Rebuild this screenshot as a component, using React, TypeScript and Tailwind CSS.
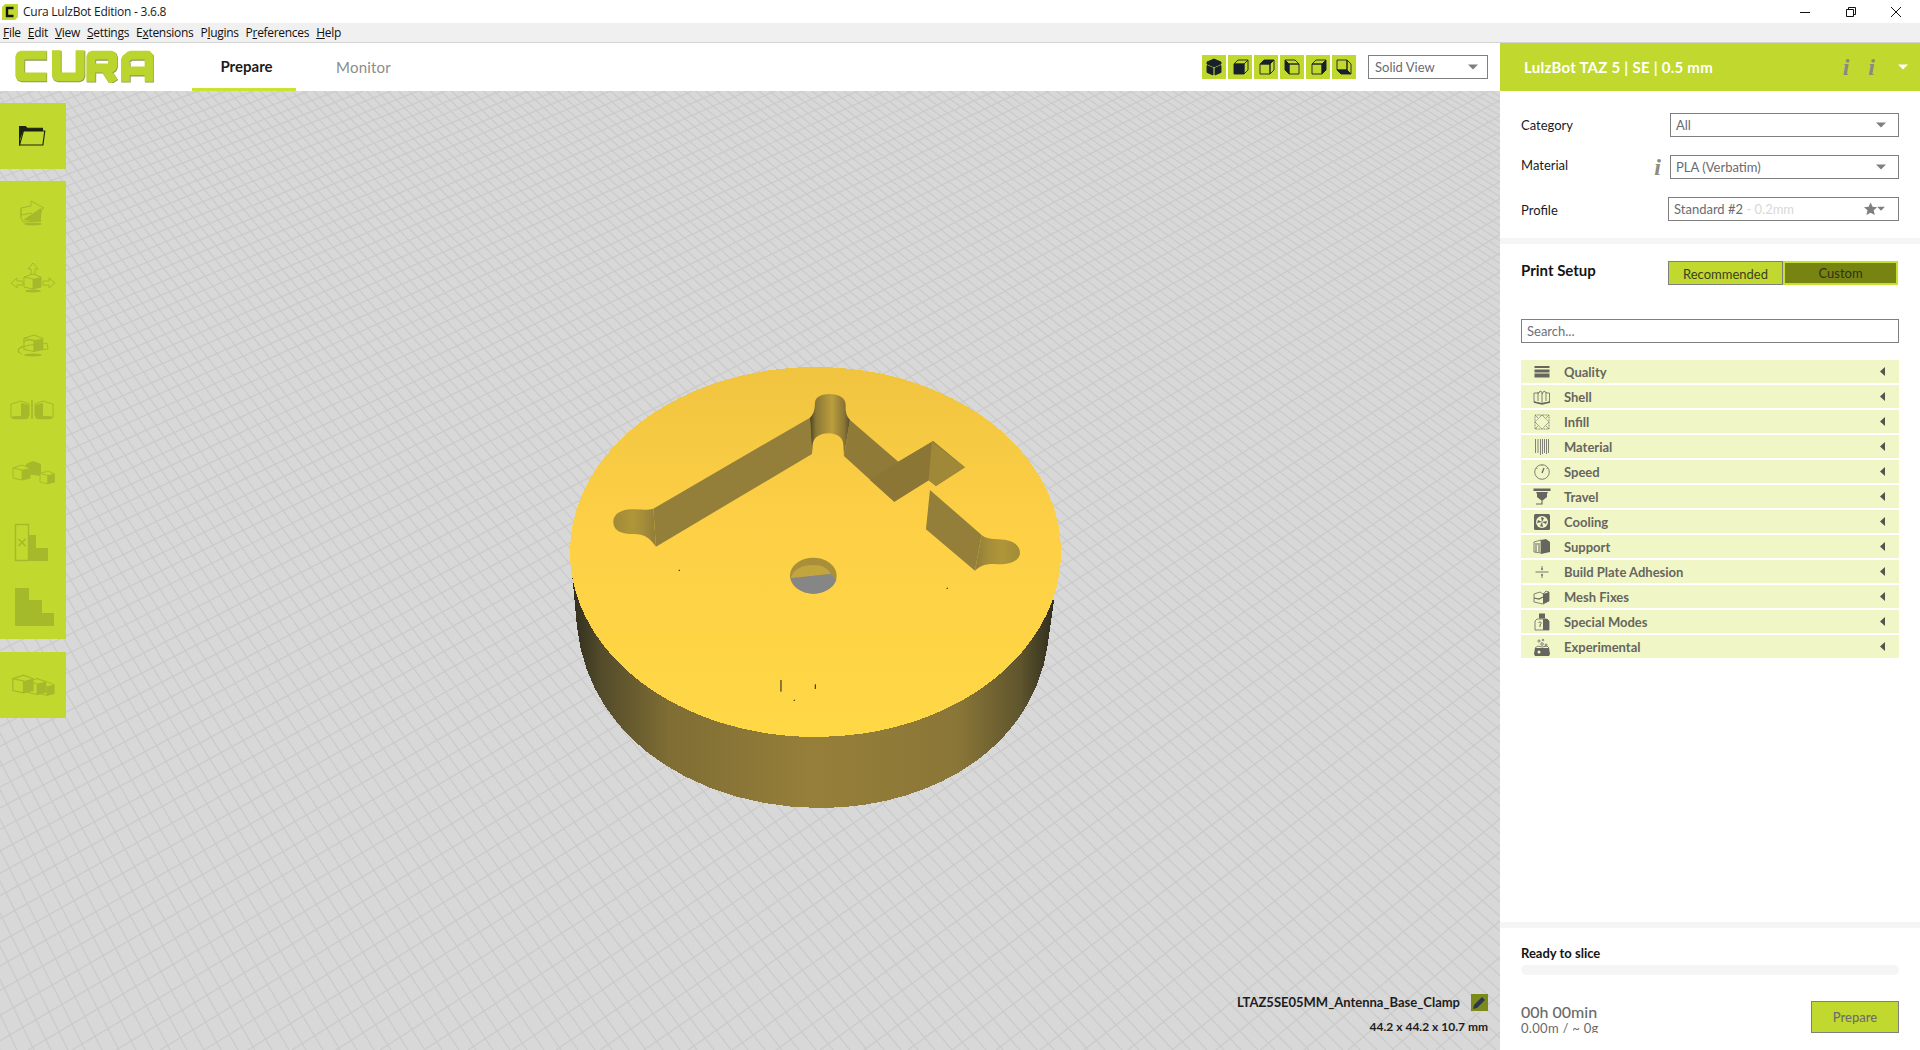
import React from 'react';

const gridA: number[] = [];
for (let x = 0; x < 3300; x += 17) gridA.push(x);
const gridB: number[] = [];
for (let x = -2700; x < 1600; x += 44) gridB.push(x);

const settings = [
  'Quality',
  'Shell',
  'Infill',
  'Material',
  'Speed',
  'Travel',
  'Cooling',
  'Support',
  'Build Plate Adhesion',
  'Mesh Fixes',
  'Special Modes',
  'Experimental',
];

const menus: [string, string, string][] = [
  ['', 'F', 'ile'],
  ['', 'E', 'dit'],
  ['', 'V', 'iew'],
  ['', 'S', 'ettings'],
  ['E', 'x', 'tensions'],
  ['P', 'l', 'ugins'],
  ['P', 'r', 'eferences'],
  ['', 'H', 'elp'],
];

// small per-icon offsets so each one lands where the screenshot has it
const iconNudge: Record<string, string> = {
  open: 'translate(3 1) scale(0.95 0.9)',
  scale: 'translate(0 -1)',
  move: 'translate(0 3)',
  rotate: 'translate(0 3)',
  mirror: 'translate(-1 0)',
  multi: 'translate(-1 2)',
  blocker: 'translate(-3 2)',
  support: 'translate(-3 2)',
  group: 'translate(-3 -4) scale(1.13)',
};

const Caret = ({ color = '#7f7f7f' }: { color?: string }) => (
  <svg width="12" height="6" viewBox="0 0 12 6">
    <path d="M1 0.5h10L6 5.5z" fill={color} />
  </svg>
);

const InfoMark = ({ className }: { className: string }) => (
  <span className={`font-['Liberation_Serif',serif] font-bold italic leading-none text-[#8a8a80] ${className}`}>i</span>
);

const ViewCube = ({ face }: { face: string }) => {
  const dark = '#18202c';
  const front = 'M6 9h10v10H6z';
  const top = 'M6 9l4-4h10l-4 4z';
  const right = 'M16 9l4-4v10l-4 4z';
  return (
    <div className="flex h-6 w-6 items-center justify-center bg-[#c1d82f]">
      <svg width="24" height="24" viewBox="0 0 24 24" fill="none" stroke={dark} strokeWidth="0.9">
        {face === 'iso' && (
          <>
            <path d="M12 4l7 3v2l-7 3-7-3V7z" fill={dark} />
            <path d="M5 10.5l6 2.6V20l-6-2.6zM19 10.5l-6 2.6V20l6-2.6z" fill={dark} />
          </>
        )}
        {face === 'left' && (
          <>
            <path d={front} fill={dark} />
            <path d={top} />
            <path d={right} />
          </>
        )}
        {face === 'top' && (
          <>
            <path d={front} />
            <path d={top} fill={dark} />
            <path d={right} />
          </>
        )}
        {face === 'back' && (
          <>
            <path d="M9 9h10v10H9z" />
            <path d="M9 9L5 5h10l4 4z" />
            <path d="M9 9L5 5v10l4 4z" fill={dark} />
          </>
        )}
        {face === 'right' && (
          <>
            <path d={front} />
            <path d={top} />
            <path d={right} fill={dark} />
          </>
        )}
        {face === 'bottom' && (
          <>
            <path d="M5 5h10v10H5z" />
            <path d="M15 5l4 4v10l-4-4z" />
            <path d="M5 15h10l4 4H9z" fill={dark} />
          </>
        )}
      </svg>
    </div>
  );
};

const ToolIcon = ({ name }: { name: string }) => {
  const c = '#a4ba2a';
  const hatch = '#a4ba2a';
  const box = (x: number, y: number, s = 1) => (
    <g transform={`translate(${x} ${y}) scale(${s})`}>
      <path d="M0 3l9-3 0 0 8 3v10l-8 2-9-2z" fill="#c1d82f" stroke={c} strokeWidth="1" />
      <path d="M9 5l8-2v10l-8 2z" fill={hatch} />
      <path d="M0 3l9 2v10" fill="none" stroke={c} strokeWidth="1" />
    </g>
  );
  return (
    <svg width="48" height="48" viewBox="0 0 48 48" fill="none">
      <g transform={iconNudge[name]}>
        {name === 'open' && (
          <>
            <path d="M8 36V15h6l2 2h16v3" stroke="#1c2310" strokeWidth="1.2" />
            <path d="M8 15h6l2 2h16v3H12l-4 10z" fill="#1c2310" />
            <path d="M12 20h22.5l-2 15.5H8z" fill="#c1d82f" stroke="#1c2310" strokeWidth="1.2" />
          </>
        )}
        {name === 'scale' && (
          <>
            <path d="M12 19l10-2v-5l13 7-2 1-3 12-16 1-2-4z" stroke={c} strokeWidth="1" />
            <path d="M14 31l18-12 0 14z" fill={hatch} />
            <path d="M12 26l11-2M12 19v9" stroke={c} strokeWidth="1" />
            <ellipse cx="24" cy="35" rx="9" ry="1.5" fill={c} />
          </>
        )}
        {name === 'move' && (
          <>
            <path d="M24 5l-5 6h3v6h4v-6h3zM2 25l6-5v3h6v4H8v3zM46 25l-6-5v3h-6v4h6v3z" stroke={c} strokeWidth="1" />
            {box(15, 16)}
            <ellipse cx="24" cy="33" rx="8" ry="1.5" fill={c} />
          </>
        )}
        {name === 'rotate' && (
          <>
            {box(15, 11, 1.1)}
            <path d="M14 22c-6 2-6 6-1 8M14 18c4-3 14-3 20 2l4-1 1 6-7 1 2-3c-6-3-14-3-19 0-5 1-7 3-5 6" stroke={c} strokeWidth="1" />
            <ellipse cx="24" cy="31" rx="9" ry="1.5" fill={c} />
          </>
        )}
        {name === 'mirror' && (
          <>
            <path d="M3 18l10-3 8 3v12l-18 1z" stroke={c} strokeWidth="1" />
            <path d="M13 30l0-13 8 2v12z" fill={hatch} />
            <path d="M45 18l-10-3-8 3v12l18 1z" stroke={c} strokeWidth="1" />
            <path d="M35 30l0-13-8 2v12z" fill={hatch} />
            <path d="M24 14v19" stroke={c} strokeWidth="1.6" />
            <ellipse cx="12" cy="32" rx="9" ry="1.3" fill={c} />
            <ellipse cx="36" cy="32" rx="9" ry="1.3" fill={c} />
          </>
        )}
        {name === 'multi' && (
          <>
            <path d="M18 11l7-3 8 3v12l-15-2z" fill={hatch} />
            {box(5, 12, 1)}
            {box(32, 18, 0.85)}
          </>
        )}
        {name === 'blocker' && (
          <>
            <path d="M23 16h7v13h12v13H23z" fill={hatch} />
            <rect x="9.5" y="5.5" width="13" height="36" fill="#c1d82f" stroke={c} strokeWidth="1.4" />
            <path d="M12.5 20l7 7M19.5 20l-7 7" stroke={c} strokeWidth="1.6" />
          </>
        )}
        {name === 'support' && <path d="M9 5h14v12h13v13h12v13H9z" transform="translate(0 -1)" fill={hatch} />}
        {name === 'group' && (
          <>
            {box(29, 22, 0.8)}
            {box(19, 19, 0.95)}
            {box(6, 16, 1.05)}
          </>
        )}
      </g>
    </svg>
  );
};

const SettingIcon = ({ name }: { name: string }) => {
  const c = '#66665f';
  return (
    <svg width="18" height="18" viewBox="0 0 18 18" fill="none" stroke={c} strokeWidth="0.8">
      {name === 'Quality' && (
        <g fill={c} stroke="none">
          <rect x="1.5" y="3" width="15" height="2" />
          <rect x="1.5" y="6.5" width="15" height="3" />
          <rect x="1.5" y="10.5" width="15" height="4" />
        </g>
      )}
      {name === 'Shell' && (
        <>
          <path d="M1 5h5l1-2 2 1v2l2-3 3 2h2.500v9l-8 1.500-7.500-1.500z" />
          <path d="M5 4v9M9 6v9M13 4v9" />
          <path d="M1 14l8 2 8-2" strokeWidth="1.4" />
        </>
      )}
      {name === 'Infill' && (
        <>
          <rect x="2" y="2" width="14" height="14" strokeDasharray="1 0.6" />
          <path d="M9 2l7 7-7 7-7-7zM2 2l3 3M16 2l-3 3M2 16l3-3M16 16l-3-3" strokeDasharray="1 0.6" />
        </>
      )}
      {name === 'Material' && <path d="M2.500 1v14M5 1v14M7.500 1v16M9.500 1v15M11.500 1v14M13.500 1v15M15.500 1v14" />}
      {name === 'Speed' && (
        <>
          <circle cx="9" cy="9" r="7.300" />
          <path d="M9 10l2-5" strokeWidth="1.300" />
          <path d="M3.500 5l1 1M14.500 5l-1 1M9 2v1" />
        </>
      )}
      {name === 'Travel' && (
        <>
          <rect x="0.500" y="0.500" width="17" height="2.500" fill={c} stroke="none" />
          <path d="M3 4h12l-1 2v3l-5 4-5-4V6z" fill={c} stroke="none" />
          <path d="M9 13v3H3" strokeWidth="1.100" />
        </>
      )}
      {name === 'Cooling' && (
        <>
          <rect x="1" y="1" width="16" height="16" rx="1.500" fill={c} stroke="none" />
          <circle cx="9" cy="9" r="6" fill="#f1f6c6" stroke="none" />
          <path d="M9 9l-1-5 3 1zM9 9l5-1-1 3zM9 9l1 5-3-1zM9 9L4 10l1-3z" fill={c} stroke="none" />
        </>
      )}
      {name === 'Support' && (
        <>
          <path d="M1 4l7-2v13l-7-1z" />
          <path d="M8 2l5-1 4 3v10l-9 2z" fill={c} stroke="none" />
          <path d="M2 6h5M3 7v7M6 7v7" strokeWidth="1" />
        </>
      )}
      {name === 'Build Plate Adhesion' && (
        <>
          <path d="M2.500 9h13" strokeWidth="0.9" />
          <path d="M9 3v4M9 11v4" />
          <path d="M7.800 5.500L9 7.500l1.200-2zM7.800 12.500L9 10.500l1.200 2z" fill={c} stroke="none" />
        </>
      )}
      {name === 'Mesh Fixes' && (
        <>
          <path d="M1 6l6-2 3 2 3-3 3 1v9l-6 3-9-2z" />
          <path d="M10 6l6-2v9l-6 3z" fill={c} stroke="none" />
          <path d="M1 10l5 1 4-2" strokeWidth="1.200" />
        </>
      )}
      {name === 'Special Modes' && (
        <>
          <path d="M6 0.500h6v5H6z" fill={c} stroke="none" />
          <path d="M4 6h10l2 2v9H2V8z" />
          <path d="M10 6h4l2 2v9h-6z" fill={c} stroke="none" />
          <path d="M5.500 10c1-2 3-1 2.500 .5L7 12v2" strokeWidth="1" />
        </>
      )}
      {name === 'Experimental' && (
        <>
          <path d="M2 10h14l1 6-1 2H2l-1-2z" fill={c} stroke="none" />
          <circle cx="6" cy="3" r="1.100" />
          <circle cx="10" cy="2" r="0.800" />
          <circle cx="9" cy="6" r="1.300" />
          <circle cx="13" cy="7" r="1" />
          <circle cx="6" cy="14" r="1.500" fill="#f1f6c6" stroke="none" />
          <path d="M2 10l3-2 4 1 5-1 2 2" />
        </>
      )}
    </svg>
  );
};

const SelectBox = ({ value, className }: { value: string; className: string }) => (
  <div className={`flex h-6 items-center justify-between border border-[#7f7f7f] bg-white text-[13px] text-[#6a6a72] ${className}`}>
    <span className="pt-[2px]">{value}</span>
    <Caret />
  </div>
);

// floor grid and printed model, coordinates taken straight from the screen
const BuildPlate = () => (
  <svg className="absolute inset-0 h-full w-full" viewBox="0 91 1500 959">
    <defs>
      <linearGradient id="topFace" x1="0" y1="0" x2="0" y2="1">
        <stop offset="0" stopColor="#f1c440" />
        <stop offset="0.45" stopColor="#fdd046" />
        <stop offset="1" stopColor="#ffd845" />
      </linearGradient>
      <linearGradient id="wall" x1="0" y1="0" x2="1" y2="0">
        <stop offset="0" stopColor="#2f2d1e" />
        <stop offset="0.06" stopColor="#534b2a" />
        <stop offset="0.2" stopColor="#7f6d34" />
        <stop offset="0.5" stopColor="#967f3a" />
        <stop offset="0.8" stopColor="#8a7637" />
        <stop offset="0.93" stopColor="#5f552d" />
        <stop offset="1" stopColor="#2f2d1e" />
      </linearGradient>
      <linearGradient id="post" x1="0" y1="0" x2="1" y2="0">
        <stop offset="0" stopColor="#4a4426" />
        <stop offset="0.15" stopColor="#8b7736" />
        <stop offset="0.55" stopColor="#bb9e3c" />
        <stop offset="0.85" stopColor="#8b7736" />
        <stop offset="1" stopColor="#544c2a" />
      </linearGradient>
      <linearGradient id="lobe" x1="0" y1="0" x2="1" y2="0">
        <stop offset="0" stopColor="#a08a38" />
        <stop offset="0.45" stopColor="#b09639" />
        <stop offset="0.7" stopColor="#a58d39" />
        <stop offset="0.95" stopColor="#937f39" />
      </linearGradient>
      <linearGradient id="lobeRight" x1="0" y1="0" x2="1" y2="0">
        <stop offset="0.05" stopColor="#937f39" />
        <stop offset="0.3" stopColor="#a58d39" />
        <stop offset="0.6" stopColor="#b09639" />
        <stop offset="1" stopColor="#a18b38" />
      </linearGradient>
    </defs>
    <rect x="0" y="91" width="1500" height="959" fill="#d8d8d8" />
    <g stroke="#cbcbcb" strokeWidth="1.300">
      {gridA.map((x) => (
        <line key={`a${x}`} x1={-1197} y1={-1500} x2={x} y2={1050} />
      ))}
      {gridB.map((x) => (
        <line key={`b${x}`} x1={4350} y1={-1500} x2={x} y2={1050} />
      ))}
    </g>
    <g shapeRendering="crispEdges">
      <path d="M572 573L577 627C590 745 705 808 820 808C935 808 1035 745 1048 643L1054 600z" fill="url(#wall)" />
      <ellipse cx="815.500" cy="552" rx="245.500" ry="185" fill="url(#topFace)" />
    </g>
    <g transform="translate(550 350) scale(0.3333)">
      <path d="M310 476L780 203L786 312L318 590z" fill="#937f39" />
      <path d="M900 210L1045 335L1150 273L1245 352L1158 408L1135 390L1033 455L882 318z" fill="#8f7a37" />
      <path d="M1045 335L1150 273L1138 390L1033 455L960 390z" fill="#8c7636" />
      <path d="M1146 275L1245 352L1158 408L1136 390z" fill="#9f8837" />
      <path
        d="M190 515C190 492 215 478 245 478C270 478 290 482 310 476L318 590C300 565 285 552 250 552C220 552 190 545 190 515z"
        fill="url(#lobe)"
      />
      <path
        d="M780 203Q795 190 795 160C795 140 815 132 840 132C865 132 887 142 887 165Q885 195 900 210L882 318L880 285C880 262 860 250 835 250C810 250 790 262 788 285L786 312z"
        fill="url(#post)"
      />
      <path d="M1140 420L1295 555L1275 662L1128 538z" fill="#937f39" />
      <path
        d="M1295 555Q1310 568 1345 568C1385 568 1410 585 1410 608C1410 630 1385 643 1345 643C1310 640 1295 645 1275 662z"
        fill="url(#lobeRight)"
      />
      <ellipse cx="790" cy="677" rx="70" ry="54" fill="#a98f3a" />
      <path d="M722 685C730 655 760 645 790 645C815 645 835 655 842 672z" fill="#c2a63d" />
      <path d="M722 685L842 672L859 690C850 715 820 731 790 731C755 731 728 712 722 685z" fill="#868686" />
      <g stroke="#1c1c14" strokeWidth="3" fill="none">
        <path d="M693 990v35M796 1003v14M386 661h4M1190 715h4M731 1051h4" />
      </g>
    </g>
  </svg>
);

const App = () => {
  return (
    <div className="flex h-[1050px] w-[1920px] flex-col overflow-hidden bg-white font-['Lato',sans-serif]">
      {/* Window title bar */}
      <div className="flex h-[23px] items-center bg-white pl-[2px] font-['Open_Sans',sans-serif] text-[12px] tracking-[-0.25px] text-[#1a1a1a]">
        <svg width="16" height="16" viewBox="0 0 16 16" className="mr-[5px]">
          <path d="M3 0h13v13l-3 3H0V3z" fill="#c1d82f" />
          <path d="M11.500 4H5v8h6.500" fill="none" stroke="#15150f" strokeWidth="2.400" />
        </svg>
        <span>Cura LulzBot Edition - 3.6.8</span>
        <div className="ml-auto flex items-center">
          <svg width="46" height="20" viewBox="0 0 46 20" fill="none" stroke="#111" strokeWidth="1">
            <path d="M18 10.500h10" />
          </svg>
          <svg width="46" height="20" viewBox="0 0 46 20" fill="none" stroke="#111" strokeWidth="1" className="mr-[-1px]">
            <path d="M18.500 7.500h7v7h-7zM20.500 7.500v-2h7v7h-2" />
          </svg>
          <svg width="46" height="20" viewBox="0 0 46 20" fill="none" stroke="#111" strokeWidth="1" className="mr-[1px]">
            <path d="M18 5l10 10M28 5L18 15" />
          </svg>
        </div>
      </div>
      {/* Menu bar */}
      <div className="flex h-[20px] items-center gap-[7px] border-b border-[#d4d4d4] bg-[#f0f0f0] pl-[3px] font-['Open_Sans',sans-serif] text-[12px] tracking-[-0.3px] text-[#111]">
        {menus.map(([pre, key, rest]) => (
          <span key={key + rest}>
            {pre}
            <span className="underline">{key}</span>
            {rest}
          </span>
        ))}
      </div>

      <div className="flex min-h-0 flex-1">
        <div className="flex min-w-0 flex-1 flex-col">
          {/* Stage header */}
          <div className="flex h-[48px] items-center bg-white">
            <svg width="140" height="34" viewBox="0 0 142 34" fill="none" className="ml-[14px] mt-[-2px]" strokeLinejoin="bevel">
              <g stroke="#8b9a55" strokeWidth="9.500" transform="translate(0.600 0.800)">
                <path d="M33 6H7L6 7v20l1 1h26M43 1v26l1 1h22l1-1V1M78 33V7l1-1h20l1 1v11l-1 1H79M92 19l9 14M113 33V10l5-4h19v27M113 22h24" />
              </g>
              <path
                d="M33 6H7L6 7v20l1 1h26M43 1v26l1 1h22l1-1V1M78 33V7l1-1h20l1 1v11l-1 1H79M92 19l9 14M113 33V10l5-4h19v27M113 22h24"
                stroke="#bcd42e"
                strokeWidth="9"
              />
            </svg>
            <div className="ml-[38px] flex h-full">
              <div className="flex w-[104px] items-center justify-center border-b-[3px] border-[#cbe22f] pl-[5px] pt-[2px] text-[15px] font-bold text-[#1c1c1c]">
                Prepare
              </div>
              <div className="ml-[13px] flex w-[106px] items-center justify-center pl-[3px] text-[15px] tracking-[0.2px] text-[#8c8c8c]">
                Monitor
              </div>
            </div>
            <div className="ml-auto flex items-center gap-[2px]">
              <ViewCube face="iso" />
              <ViewCube face="left" />
              <ViewCube face="top" />
              <ViewCube face="back" />
              <ViewCube face="right" />
              <ViewCube face="bottom" />
            </div>
            <div className="ml-[12px] mr-[12px]">
              <SelectBox value="Solid View" className="w-[120px] pl-[6px] pr-[8px]" />
            </div>
          </div>

          {/* 3D viewport */}
          <div className="relative min-h-0 flex-1">
            <BuildPlate />
            <div className="absolute left-0 top-[12px] flex w-[66px] flex-col">
              <div className="flex h-[66px] items-center justify-center bg-[#c1d82f]">
                <ToolIcon name="open" />
              </div>
              <div className="mt-[12px] flex h-[458px] flex-col bg-[#c1d82f]">
                {['scale', 'move', 'rotate', 'mirror', 'multi', 'blocker', 'support'].map((n) => (
                  <div key={n} className="flex flex-1 items-center justify-center">
                    <ToolIcon name={n} />
                  </div>
                ))}
              </div>
              <div className="mt-[13px] flex h-[66px] items-center justify-center bg-[#c1d82f]">
                <ToolIcon name="group" />
              </div>
            </div>
            <div className="absolute bottom-[14px] right-[12px] flex flex-col items-end text-[#1d1d1d]">
              <div className="flex items-center">
                <span className="text-[13px] font-bold">LTAZ5SE05MM_Antenna_Base_Clamp</span>
                <div className="ml-[11px] flex h-[17px] w-[17px] items-center justify-center bg-[#7c8a1b]">
                  <svg width="15" height="15" viewBox="0 0 15 15">
                    <path d="M1 14l1-4 8-8 3 3-8 8z" fill="#2a3754" />
                  </svg>
                </div>
              </div>
              <span className="mt-[6px] text-[12px] font-bold">44.2 x 44.2 x 10.7 mm</span>
            </div>
          </div>
        </div>

        {/* Right sidebar */}
        <div className="flex w-[420px] flex-col bg-white text-[13px]">
          <div className="flex h-[48px] items-center bg-[#c1d82f] pl-[24px]">
            <span className="text-[15px] font-bold tracking-[0.25px] text-white">LulzBot TAZ 5 | SE | 0.5 mm</span>
            <InfoMark className="ml-auto text-[24px]" />
            <InfoMark className="ml-[19px] text-[24px]" />
            <div className="ml-[22px] mr-[11px]">
              <Caret color="#ffffff" />
            </div>
          </div>

          <div className="flex flex-col pl-[21px] pr-[21px] pt-[22px] text-[#1a1a1a]">
            <div className="flex h-6 items-center justify-between">
              <span className="pt-[2px]">Category</span>
              <SelectBox value="All" className="w-[229px] pl-[5px] pr-[11px]" />
            </div>
            <div className="mt-[18px] flex h-6 items-center">
              <span className="mb-[2px]">Material</span>
              <InfoMark className="ml-auto mr-[9px] text-[24px]" />
              <SelectBox value="PLA (Verbatim)" className="w-[229px] pl-[5px] pr-[11px]" />
            </div>
            <div className="mt-[18px] flex h-6 items-center justify-between">
              <span className="mt-[4px]">Profile</span>
              <div className="flex h-6 w-[231px] items-center justify-between border border-[#7f7f7f] pl-[5px] pr-[12px] text-[#6a6a72]">
                <span className="pt-[2px]">
                  Standard #2 <span className="text-[#d8d8d8]">- 0.2mm</span>
                </span>
                <svg width="22" height="14" viewBox="0 0 20 12">
                  <path d="M6 0l1.800 4 4.200.4-3.200 2.800 1 4.300L6 9.300l-3.800 2.200 1-4.300L0 4.400 4.200 4z" fill="#7f7f7f" />
                  <path d="M12 4h7l-3.500 3.500z" fill="#7f7f7f" />
                </svg>
              </div>
            </div>
          </div>

          <div className="mt-[17px] h-[6px] bg-[#f5f5f5]" />

          <div className="flex flex-col pl-[21px] pr-[21px] pt-[17px]">
            <div className="flex h-6 items-start justify-between">
              <span className="mt-[-2px] text-[15px] font-bold text-[#141414]">Print Setup</span>
              <div className="mr-[1px] flex">
                <div className="flex h-6 w-[115px] items-end justify-center border border-[#7f7f7f] bg-[#c1d82f] text-[#3a3f20]">
                  Recommended
                </div>
                <div className="flex h-6 w-[115px] items-end justify-center border-2 border-[#c8e030] bg-[#788412] text-[#2f3214]">
                  Custom
                </div>
              </div>
            </div>
            <div className="mt-[34px] flex h-6 items-center border border-[#7f7f7f] pl-[5px] pt-[2px] text-[#6f6f78]">Search...</div>
            <div className="mt-[17px] flex flex-col gap-[2px]">
              {settings.map((s) => (
                <div key={s} className="flex h-[23px] items-center bg-[#f1f6c6] text-[13px] font-medium text-[#66665f]">
                  <div className="ml-[12px] flex w-[18px] items-center justify-center">
                    <SettingIcon name={s} />
                  </div>
                  <span className="ml-[13px] pt-[2px] font-bold">{s}</span>
                  <svg width="5" height="9" viewBox="0 0 5 9" className="ml-auto mr-[14px]">
                    <path d="M5 0v9L0 4.500z" fill="#55554f" />
                  </svg>
                </div>
              ))}
            </div>
          </div>

          <div className="mt-auto h-[6px] bg-[#f5f5f5]" />

          <div className="flex h-[122px] flex-col overflow-hidden pl-[21px] pr-[21px] pt-[17px]">
            <span className="text-[13px] font-bold leading-[16px] text-[#141414]">Ready to slice</span>
            <div className="mt-[4px] h-[10px] rounded-[5px] bg-[#f5f5f5]" />
            <div className="mt-[26px] flex items-start justify-between">
              <div className="flex h-[32px] flex-col overflow-hidden text-[#6a6a6a]">
                <span className="mt-[2px] text-[16px] font-medium leading-[18px]">00h 00min</span>
                <span className="text-[13px] leading-[15px] tracking-[0.3px]">0.00m / ~ 0g</span>
              </div>
              <div className="flex h-[32px] w-[88px] items-center justify-center border border-[#7f7f7f] bg-[#c1d82f] pt-[2px] font-medium text-[#6e6e6e]">
                Prepare
              </div>
            </div>
          </div>
        </div>
      </div>
    </div>
  );
};

export default App;
